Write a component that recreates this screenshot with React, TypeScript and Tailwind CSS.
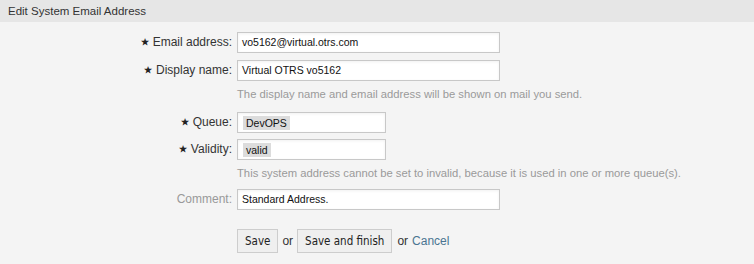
import React from "react";

const Star = () => (
  <span className="mr-[4px] inline-block text-[9px] font-bold align-[1px] text-[#222]">★</span>
);

function Label({ text, required, muted }: { text: string; required?: boolean; muted?: boolean }) {
  return (
    <div
      className={`w-[237px] shrink-0 pr-[5px] text-right text-[12px] leading-[21px] ${
        muted ? "text-[#999]" : "text-[#333]"
      }`}
    >
      {required && <Star />}
      {text}
    </div>
  );
}

function TextInput({ value, wide = true }: { value: string; wide?: boolean }) {
  return (
    <div
      className={`${wide ? "w-[263px]" : "w-[149px]"} h-[21px] border border-[#c8c8c8] bg-white px-[4px] text-[10.5px] leading-[19px] text-[#111] shadow-[inset_0_1px_3px_rgba(0,0,0,0.06)]`}
    >
      {value}
    </div>
  );
}

function TagInput({ value }: { value: string }) {
  return (
    <div className="flex h-[21px] w-[149px] items-center border border-[#c8c8c8] bg-white px-[5px] shadow-[inset_0_1px_3px_rgba(0,0,0,0.06)]">
      <span className="bg-[#dcdcdc] px-[3px] text-[10.5px] leading-[14px] text-[#111]">{value}</span>
    </div>
  );
}

const btn =
  "h-[24px] border border-[#cdcdcd] bg-[#efefef] px-[7px] text-[11.5px] leading-[22px] font-medium text-[#222] font-['DejaVu_Sans_Condensed','DejaVu_Sans',sans-serif] font-stretch-condensed";

export default function App() {
  return (
    <div className="w-[754px] h-[264px] bg-[#f4f4f4] font-['Liberation_Sans',Arial,sans-serif] overflow-hidden">
      <div className="h-[22px] bg-[#e6e6e6] pl-[8px] text-[11.5px] leading-[22px] text-[#333]">
        Edit System Email Address
      </div>
      <div className="flex flex-col pt-[10px]">
        <div className="flex">
          <Label text="Email address:" required />
          <TextInput value="vo5162@virtual.otrs.com" />
        </div>
        <div className="mt-[7px] flex">
          <Label text="Display name:" required />
          <TextInput value="Virtual OTRS vo5162" />
        </div>
        <div className="mt-[6px] pl-[237px] text-[11.25px] leading-[14px] text-[#9a9a9a]">
          The display name and email address will be shown on mail you send.
        </div>
        <div className="mt-[11px] flex">
          <Label text="Queue:" required />
          <TagInput value="DevOPS" />
        </div>
        <div className="mt-[6px] flex">
          <Label text="Validity:" required />
          <TagInput value="valid" />
        </div>
        <div className="mt-[6px] pl-[237px] text-[11.25px] leading-[14px] text-[#9a9a9a]">
          This system address cannot be set to invalid, because it is used in one or more queue(s).
        </div>
        <div className="mt-[9px] flex">
          <Label text="Comment:" muted />
          <TextInput value="Standard Address." />
        </div>
        <div className="mt-[19px] flex items-center pl-[237px] text-[12px] text-[#333]">
          <button className={btn}>Save</button>
          <span className="mx-[4px]">or</span>
          <button className={btn}>Save and finish</button>
          <span className="ml-[5px]">or</span>
          <a className="ml-[4px] text-[#4a7591]">Cancel</a>
        </div>
      </div>
    </div>
  );
}
